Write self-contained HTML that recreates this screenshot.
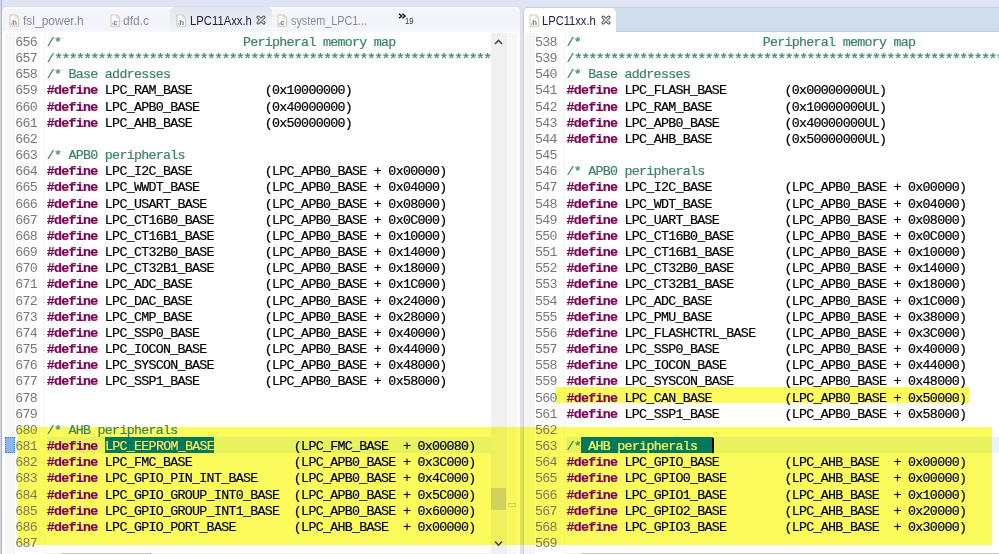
<!DOCTYPE html>
<html><head><meta charset="utf-8">
<style>
html,body{margin:0;padding:0;}
body{width:999px;height:554px;position:relative;overflow:hidden;background:#dfe3f4;font-family:"Liberation Sans",sans-serif;}
div{position:absolute;box-sizing:border-box;}
.fi{position:absolute;}
.ln{font-family:"Liberation Mono",monospace;font-size:13.3px;letter-spacing:-0.71px;line-height:16px;height:16px;color:#777777;white-space:pre;padding-top:0px;}
.cd{-webkit-text-stroke:0.2px currentColor;font-family:"Liberation Mono",monospace;font-size:13.3px;letter-spacing:-0.71px;line-height:16px;height:16px;color:#000;white-space:pre;overflow:hidden;}
.cm{color:#3c806c;}
.ast{font-size:15.5px;letter-spacing:-2.03px;vertical-align:-1.5px;}
.kw{color:#7f0055;font-weight:bold;}
.tt{font-size:12px;line-height:14px;white-space:pre;}
</style></head><body>

<div style="left:0;top:6px;width:999px;height:1px;background:#dadff2"></div>
<div style="left:0;top:0;width:1px;height:554px;background:#d0d4e4"></div>
<div style="left:1px;top:0px;width:1px;height:554px;background:#b8b8b8"></div>
<div style="left:2px;top:31px;width:518px;height:1px;background:#f9fafc"></div>
<div style="left:2px;top:7px;width:518px;height:24px;background:#f4f5fb;border-radius:5px 5px 0 0;border-top:2px solid #fafbfe"></div>
<div style="left:170px;top:7px;width:102px;height:25px;background:linear-gradient(#dfe6f0,#f3f5fa);border-radius:5px 5px 0 0;"></div>
<div style="left:2px;top:32px;width:518px;height:522px;background:#fff"></div>
<div style="left:5px;top:33px;width:10px;height:521px;background:#f7f7f7"></div>
<div style="left:44px;top:33px;width:1px;height:521px;background:#f4f4f4"></div>
<div style="left:520px;top:7px;width:3px;height:547px;background:#dde1f3"></div>
<div style="left:523px;top:7px;width:480px;height:547px;background:#fff;border-left:1px solid #cbcdd6;border-top:1px solid #cdd2e0;border-top-left-radius:5px"></div>
<div style="left:600px;top:8px;width:399px;height:24px;background:#cfdded;border-bottom:1px solid #c2d0e0"></div>
<div style="left:524px;top:8px;width:92px;height:24px;background:#fff;border-radius:5px 5px 0 0;"></div>
<div style="left:524px;top:31px;width:92px;height:1px;background:#fff"></div>
<div style="left:524px;top:32px;width:475px;height:522px;background:#fff"></div>
<div style="left:525px;top:33px;width:10px;height:521px;background:#f5f5f5"></div>
<div style="left:564px;top:33px;width:1px;height:521px;background:#f4f4f4"></div>
<div style="left:46.7px;top:437px;width:444px;height:16px;background:#e8f2fe"></div>
<div style="left:566.4px;top:437px;width:433px;height:16px;background:#e8f2fe"></div>
<div style="left:105px;top:437px;width:109px;height:16px;background:#0078d7"></div>
<div style="left:581px;top:437px;width:132px;height:16px;background:#0078d7"></div>
<svg class="fi" style="left:9.0px;top:13.5px" width="12" height="14" viewBox="0 0 12 14"><path d="M1 1 H6.8 L9.6 3.8 V12.2 H1 Z" fill="#fff" stroke="#d6c9a4" stroke-width="1.1" stroke-linejoin="round"/><path d="M6.6 1.2 V4 H9.4" fill="none" stroke="#e4dabd" stroke-width="0.9"/><rect x="2" y="9.3" width="1.3" height="1.3" fill="#8aa0c4"/><text x="3.3" y="10.6" font-family="Liberation Sans" font-size="7.8" font-weight="bold" fill="#5873a0">h</text></svg>
<div class="tt" style="left:23px;top:14px;color:#858a99">fsl_power.h</div>
<svg class="fi" style="left:109.5px;top:13.5px" width="12" height="14" viewBox="0 0 12 14"><path d="M1 1 H6.8 L9.6 3.8 V12.2 H1 Z" fill="#fff" stroke="#d6c9a4" stroke-width="1.1" stroke-linejoin="round"/><path d="M6.6 1.2 V4 H9.4" fill="none" stroke="#e4dabd" stroke-width="0.9"/><rect x="2" y="9.3" width="1.3" height="1.3" fill="#8aa0c4"/><text x="3.3" y="10.6" font-family="Liberation Sans" font-size="7.8" font-weight="bold" fill="#5873a0">c</text></svg>
<div class="tt" style="left:123px;top:14px;color:#858a99">dfd.c</div>
<svg class="fi" style="left:176.0px;top:13.5px" width="12" height="14" viewBox="0 0 12 14"><path d="M1 1 H6.8 L9.6 3.8 V12.2 H1 Z" fill="#fff" stroke="#d6c9a4" stroke-width="1.1" stroke-linejoin="round"/><path d="M6.6 1.2 V4 H9.4" fill="none" stroke="#e4dabd" stroke-width="0.9"/><rect x="2" y="9.3" width="1.3" height="1.3" fill="#8aa0c4"/><text x="3.3" y="10.6" font-family="Liberation Sans" font-size="7.8" font-weight="bold" fill="#5873a0">h</text></svg>
<div class="tt" style="left:189.5px;top:14px;color:#1e1e3c;transform:scaleX(0.94);transform-origin:0 0">LPC11Axx.h</div>
<svg class="fi" style="left:255.8px;top:15.0px" width="10" height="10" viewBox="0 0 10 10"><path d="M2.2 2.2 L7.8 7.8 M7.8 2.2 L2.2 7.8" fill="none" stroke="#4d4d4d" stroke-width="3.3" stroke-linecap="round"/><path d="M2.2 2.2 L7.8 7.8 M7.8 2.2 L2.2 7.8" fill="none" stroke="#fff" stroke-width="1.3" stroke-linecap="round"/></svg>
<svg class="fi" style="left:276.5px;top:13.5px" width="12" height="14" viewBox="0 0 12 14"><path d="M1 1 H6.8 L9.6 3.8 V12.2 H1 Z" fill="#fff" stroke="#d6c9a4" stroke-width="1.1" stroke-linejoin="round"/><path d="M6.6 1.2 V4 H9.4" fill="none" stroke="#e4dabd" stroke-width="0.9"/><rect x="2" y="9.3" width="1.3" height="1.3" fill="#8aa0c4"/><text x="3.3" y="10.6" font-family="Liberation Sans" font-size="7.8" font-weight="bold" fill="#5873a0">c</text></svg>
<div class="tt" style="left:290.5px;top:14px;color:#858a99;transform:scaleX(0.9);transform-origin:0 0">system_LPC1...</div>
<svg class="fi" style="left:398px;top:13px" width="9" height="6" viewBox="0 0 9 6"><path d="M1 0.8 L3.6 3 L1 5.2 M4.4 0.8 L7 3 L4.4 5.2" fill="none" stroke="#111" stroke-width="1.5"/></svg>
<div class="tt" style="left:405px;top:16px;font-size:9px;line-height:10px;color:#333;transform:scaleX(0.85);transform-origin:0 0">19</div>
<svg class="fi" style="left:528.7px;top:13.5px" width="12" height="14" viewBox="0 0 12 14"><path d="M1 1 H6.8 L9.6 3.8 V12.2 H1 Z" fill="#fff" stroke="#d6c9a4" stroke-width="1.1" stroke-linejoin="round"/><path d="M6.6 1.2 V4 H9.4" fill="none" stroke="#e4dabd" stroke-width="0.9"/><rect x="2" y="9.3" width="1.3" height="1.3" fill="#8aa0c4"/><text x="3.3" y="10.6" font-family="Liberation Sans" font-size="7.8" font-weight="bold" fill="#5873a0">h</text></svg>
<div class="tt" style="left:542px;top:14px;color:#1e1e3c;transform:scaleX(0.93);transform-origin:0 0">LPC11xx.h</div>
<svg class="fi" style="left:601.0px;top:15.0px" width="10" height="10" viewBox="0 0 10 10"><path d="M2.2 2.2 L7.8 7.8 M7.8 2.2 L2.2 7.8" fill="none" stroke="#4d4d4d" stroke-width="3.3" stroke-linecap="round"/><path d="M2.2 2.2 L7.8 7.8 M7.8 2.2 L2.2 7.8" fill="none" stroke="#fff" stroke-width="1.3" stroke-linecap="round"/></svg>
<div class="ln" style="top:34.90px;left:15.19px">656</div>
<div class="cd" style="top:34.90px;left:46.70px;width:444.30px"><span class="cm">/*                         Peripheral memory map</span></div>
<div class="ln" style="top:51.07px;left:15.19px">657</div>
<div class="cd" style="top:51.07px;left:46.70px;width:444.30px"><span class="cm">/<span class="ast">******************************************************************************************</span></span></div>
<div class="ln" style="top:67.24px;left:15.19px">658</div>
<div class="cd" style="top:67.24px;left:46.70px;width:444.30px"><span class="cm">/* Base addresses</span></div>
<div class="ln" style="top:83.41px;left:15.19px">659</div>
<div class="cd" style="top:83.41px;left:46.70px;width:444.30px"><span class="kw">#define</span> LPC_RAM_BASE          (0x10000000)</div>
<div class="ln" style="top:99.58px;left:15.19px">660</div>
<div class="cd" style="top:99.58px;left:46.70px;width:444.30px"><span class="kw">#define</span> LPC_APB0_BASE         (0x40000000)</div>
<div class="ln" style="top:115.75px;left:15.19px">661</div>
<div class="cd" style="top:115.75px;left:46.70px;width:444.30px"><span class="kw">#define</span> LPC_AHB_BASE          (0x50000000)</div>
<div class="ln" style="top:131.92px;left:15.19px">662</div>
<div class="ln" style="top:148.09px;left:15.19px">663</div>
<div class="cd" style="top:148.09px;left:46.70px;width:444.30px"><span class="cm">/* APB0 peripherals</span></div>
<div class="ln" style="top:164.26px;left:15.19px">664</div>
<div class="cd" style="top:164.26px;left:46.70px;width:444.30px"><span class="kw">#define</span> LPC_I2C_BASE          (LPC_APB0_BASE + 0x00000)</div>
<div class="ln" style="top:180.43px;left:15.19px">665</div>
<div class="cd" style="top:180.43px;left:46.70px;width:444.30px"><span class="kw">#define</span> LPC_WWDT_BASE         (LPC_APB0_BASE + 0x04000)</div>
<div class="ln" style="top:196.60px;left:15.19px">666</div>
<div class="cd" style="top:196.60px;left:46.70px;width:444.30px"><span class="kw">#define</span> LPC_USART_BASE        (LPC_APB0_BASE + 0x08000)</div>
<div class="ln" style="top:212.77px;left:15.19px">667</div>
<div class="cd" style="top:212.77px;left:46.70px;width:444.30px"><span class="kw">#define</span> LPC_CT16B0_BASE       (LPC_APB0_BASE + 0x0C000)</div>
<div class="ln" style="top:228.94px;left:15.19px">668</div>
<div class="cd" style="top:228.94px;left:46.70px;width:444.30px"><span class="kw">#define</span> LPC_CT16B1_BASE       (LPC_APB0_BASE + 0x10000)</div>
<div class="ln" style="top:245.11px;left:15.19px">669</div>
<div class="cd" style="top:245.11px;left:46.70px;width:444.30px"><span class="kw">#define</span> LPC_CT32B0_BASE       (LPC_APB0_BASE + 0x14000)</div>
<div class="ln" style="top:261.28px;left:15.19px">670</div>
<div class="cd" style="top:261.28px;left:46.70px;width:444.30px"><span class="kw">#define</span> LPC_CT32B1_BASE       (LPC_APB0_BASE + 0x18000)</div>
<div class="ln" style="top:277.45px;left:15.19px">671</div>
<div class="cd" style="top:277.45px;left:46.70px;width:444.30px"><span class="kw">#define</span> LPC_ADC_BASE          (LPC_APB0_BASE + 0x1C000)</div>
<div class="ln" style="top:293.62px;left:15.19px">672</div>
<div class="cd" style="top:293.62px;left:46.70px;width:444.30px"><span class="kw">#define</span> LPC_DAC_BASE          (LPC_APB0_BASE + 0x24000)</div>
<div class="ln" style="top:309.79px;left:15.19px">673</div>
<div class="cd" style="top:309.79px;left:46.70px;width:444.30px"><span class="kw">#define</span> LPC_CMP_BASE          (LPC_APB0_BASE + 0x28000)</div>
<div class="ln" style="top:325.96px;left:15.19px">674</div>
<div class="cd" style="top:325.96px;left:46.70px;width:444.30px"><span class="kw">#define</span> LPC_SSP0_BASE         (LPC_APB0_BASE + 0x40000)</div>
<div class="ln" style="top:342.13px;left:15.19px">675</div>
<div class="cd" style="top:342.13px;left:46.70px;width:444.30px"><span class="kw">#define</span> LPC_IOCON_BASE        (LPC_APB0_BASE + 0x44000)</div>
<div class="ln" style="top:358.30px;left:15.19px">676</div>
<div class="cd" style="top:358.30px;left:46.70px;width:444.30px"><span class="kw">#define</span> LPC_SYSCON_BASE       (LPC_APB0_BASE + 0x48000)</div>
<div class="ln" style="top:374.47px;left:15.19px">677</div>
<div class="cd" style="top:374.47px;left:46.70px;width:444.30px"><span class="kw">#define</span> LPC_SSP1_BASE         (LPC_APB0_BASE + 0x58000)</div>
<div class="ln" style="top:390.64px;left:15.19px">678</div>
<div class="ln" style="top:406.81px;left:15.19px">679</div>
<div class="ln" style="top:422.98px;left:15.19px">680</div>
<div class="cd" style="top:422.98px;left:46.70px;width:444.30px"><span class="cm">/* AHB peripherals</span></div>
<div class="ln" style="top:439.15px;left:15.19px">681</div>
<div class="cd" style="top:439.15px;left:46.70px;width:444.30px"><span class="kw">#define</span> LPC_EEPROM_BASE           (LPC_FMC_BASE  + 0x00080)</div>
<div class="ln" style="top:455.32px;left:15.19px">682</div>
<div class="cd" style="top:455.32px;left:46.70px;width:444.30px"><span class="kw">#define</span> LPC_FMC_BASE              (LPC_APB0_BASE + 0x3C000)</div>
<div class="ln" style="top:471.49px;left:15.19px">683</div>
<div class="cd" style="top:471.49px;left:46.70px;width:444.30px"><span class="kw">#define</span> LPC_GPIO_PIN_INT_BASE     (LPC_APB0_BASE + 0x4C000)</div>
<div class="ln" style="top:487.66px;left:15.19px">684</div>
<div class="cd" style="top:487.66px;left:46.70px;width:444.30px"><span class="kw">#define</span> LPC_GPIO_GROUP_INT0_BASE  (LPC_APB0_BASE + 0x5C000)</div>
<div class="ln" style="top:503.83px;left:15.19px">685</div>
<div class="cd" style="top:503.83px;left:46.70px;width:444.30px"><span class="kw">#define</span> LPC_GPIO_GROUP_INT1_BASE  (LPC_APB0_BASE + 0x60000)</div>
<div class="ln" style="top:520.00px;left:15.19px">686</div>
<div class="cd" style="top:520.00px;left:46.70px;width:444.30px"><span class="kw">#define</span> LPC_GPIO_PORT_BASE        (LPC_AHB_BASE  + 0x00000)</div>
<div class="ln" style="top:536.17px;left:15.19px">687</div>
<div class="ln" style="top:34.90px;left:534.99px">538</div>
<div class="cd" style="top:34.90px;left:566.40px;width:432.60px"><span class="cm">/*                         Peripheral memory map</span></div>
<div class="ln" style="top:51.07px;left:534.99px">539</div>
<div class="cd" style="top:51.07px;left:566.40px;width:432.60px"><span class="cm">/<span class="ast">******************************************************************************************</span></span></div>
<div class="ln" style="top:67.24px;left:534.99px">540</div>
<div class="cd" style="top:67.24px;left:566.40px;width:432.60px"><span class="cm">/* Base addresses</span></div>
<div class="ln" style="top:83.41px;left:534.99px">541</div>
<div class="cd" style="top:83.41px;left:566.40px;width:432.60px"><span class="kw">#define</span> LPC_FLASH_BASE        (0x00000000UL)</div>
<div class="ln" style="top:99.58px;left:534.99px">542</div>
<div class="cd" style="top:99.58px;left:566.40px;width:432.60px"><span class="kw">#define</span> LPC_RAM_BASE          (0x10000000UL)</div>
<div class="ln" style="top:115.75px;left:534.99px">543</div>
<div class="cd" style="top:115.75px;left:566.40px;width:432.60px"><span class="kw">#define</span> LPC_APB0_BASE         (0x40000000UL)</div>
<div class="ln" style="top:131.92px;left:534.99px">544</div>
<div class="cd" style="top:131.92px;left:566.40px;width:432.60px"><span class="kw">#define</span> LPC_AHB_BASE          (0x50000000UL)</div>
<div class="ln" style="top:148.09px;left:534.99px">545</div>
<div class="ln" style="top:164.26px;left:534.99px">546</div>
<div class="cd" style="top:164.26px;left:566.40px;width:432.60px"><span class="cm">/* APB0 peripherals</span></div>
<div class="ln" style="top:180.43px;left:534.99px">547</div>
<div class="cd" style="top:180.43px;left:566.40px;width:432.60px"><span class="kw">#define</span> LPC_I2C_BASE          (LPC_APB0_BASE + 0x00000)</div>
<div class="ln" style="top:196.60px;left:534.99px">548</div>
<div class="cd" style="top:196.60px;left:566.40px;width:432.60px"><span class="kw">#define</span> LPC_WDT_BASE          (LPC_APB0_BASE + 0x04000)</div>
<div class="ln" style="top:212.77px;left:534.99px">549</div>
<div class="cd" style="top:212.77px;left:566.40px;width:432.60px"><span class="kw">#define</span> LPC_UART_BASE         (LPC_APB0_BASE + 0x08000)</div>
<div class="ln" style="top:228.94px;left:534.99px">550</div>
<div class="cd" style="top:228.94px;left:566.40px;width:432.60px"><span class="kw">#define</span> LPC_CT16B0_BASE       (LPC_APB0_BASE + 0x0C000)</div>
<div class="ln" style="top:245.11px;left:534.99px">551</div>
<div class="cd" style="top:245.11px;left:566.40px;width:432.60px"><span class="kw">#define</span> LPC_CT16B1_BASE       (LPC_APB0_BASE + 0x10000)</div>
<div class="ln" style="top:261.28px;left:534.99px">552</div>
<div class="cd" style="top:261.28px;left:566.40px;width:432.60px"><span class="kw">#define</span> LPC_CT32B0_BASE       (LPC_APB0_BASE + 0x14000)</div>
<div class="ln" style="top:277.45px;left:534.99px">553</div>
<div class="cd" style="top:277.45px;left:566.40px;width:432.60px"><span class="kw">#define</span> LPC_CT32B1_BASE       (LPC_APB0_BASE + 0x18000)</div>
<div class="ln" style="top:293.62px;left:534.99px">554</div>
<div class="cd" style="top:293.62px;left:566.40px;width:432.60px"><span class="kw">#define</span> LPC_ADC_BASE          (LPC_APB0_BASE + 0x1C000)</div>
<div class="ln" style="top:309.79px;left:534.99px">555</div>
<div class="cd" style="top:309.79px;left:566.40px;width:432.60px"><span class="kw">#define</span> LPC_PMU_BASE          (LPC_APB0_BASE + 0x38000)</div>
<div class="ln" style="top:325.96px;left:534.99px">556</div>
<div class="cd" style="top:325.96px;left:566.40px;width:432.60px"><span class="kw">#define</span> LPC_FLASHCTRL_BASE    (LPC_APB0_BASE + 0x3C000)</div>
<div class="ln" style="top:342.13px;left:534.99px">557</div>
<div class="cd" style="top:342.13px;left:566.40px;width:432.60px"><span class="kw">#define</span> LPC_SSP0_BASE         (LPC_APB0_BASE + 0x40000)</div>
<div class="ln" style="top:358.30px;left:534.99px">558</div>
<div class="cd" style="top:358.30px;left:566.40px;width:432.60px"><span class="kw">#define</span> LPC_IOCON_BASE        (LPC_APB0_BASE + 0x44000)</div>
<div class="ln" style="top:374.47px;left:534.99px">559</div>
<div class="cd" style="top:374.47px;left:566.40px;width:432.60px"><span class="kw">#define</span> LPC_SYSCON_BASE       (LPC_APB0_BASE + 0x48000)</div>
<div class="ln" style="top:390.64px;left:534.99px">560</div>
<div class="cd" style="top:390.64px;left:566.40px;width:432.60px"><span class="kw">#define</span> LPC_CAN_BASE          (LPC_APB0_BASE + 0x50000)</div>
<div class="ln" style="top:406.81px;left:534.99px">561</div>
<div class="cd" style="top:406.81px;left:566.40px;width:432.60px"><span class="kw">#define</span> LPC_SSP1_BASE         (LPC_APB0_BASE + 0x58000)</div>
<div class="ln" style="top:422.98px;left:534.99px">562</div>
<div class="ln" style="top:439.15px;left:534.99px">563</div>
<div class="cd" style="top:439.15px;left:566.40px;width:432.60px"><span class="cm">/*</span></div>
<div class="ln" style="top:455.32px;left:534.99px">564</div>
<div class="cd" style="top:455.32px;left:566.40px;width:432.60px"><span class="kw">#define</span> LPC_GPIO_BASE         (LPC_AHB_BASE  + 0x00000)</div>
<div class="ln" style="top:471.49px;left:534.99px">565</div>
<div class="cd" style="top:471.49px;left:566.40px;width:432.60px"><span class="kw">#define</span> LPC_GPIO0_BASE        (LPC_AHB_BASE  + 0x00000)</div>
<div class="ln" style="top:487.66px;left:534.99px">566</div>
<div class="cd" style="top:487.66px;left:566.40px;width:432.60px"><span class="kw">#define</span> LPC_GPIO1_BASE        (LPC_AHB_BASE  + 0x10000)</div>
<div class="ln" style="top:503.83px;left:534.99px">567</div>
<div class="cd" style="top:503.83px;left:566.40px;width:432.60px"><span class="kw">#define</span> LPC_GPIO2_BASE        (LPC_AHB_BASE  + 0x20000)</div>
<div class="ln" style="top:520.00px;left:534.99px">568</div>
<div class="cd" style="top:520.00px;left:566.40px;width:432.60px"><span class="kw">#define</span> LPC_GPIO3_BASE        (LPC_AHB_BASE  + 0x30000)</div>
<div class="ln" style="top:536.17px;left:534.99px">569</div>
<div class="cd" style="top:439.15px;left:105px;color:#fff">LPC_EEPROM_BASE</div>
<div class="cd" style="top:439.15px;left:581px;color:#fff"> AHB peripherals</div>
<div style="left:712px;top:438px;width:2px;height:15px;background:#000"></div>
<div style="left:5px;top:437px;width:10px;height:16px;background:#8ab8ec;border:1px dotted #3a7fd0"></div>
<div style="left:491px;top:33px;width:16px;height:521px;background:#f0f0f0"></div>
<div style="left:507px;top:33px;width:10px;height:521px;background:#f7f7f7"></div>
<svg class="fi" style="left:494px;top:38px" width="9" height="8" viewBox="0 0 9 8"><path d="M1 6 L4.5 2.3 L8 6" fill="none" stroke="#404040" stroke-width="1.5"/></svg>
<svg class="fi" style="left:494px;top:539px" width="9" height="8" viewBox="0 0 9 8"><path d="M1 2.5 L4.5 6.2 L8 2.5" fill="none" stroke="#404040" stroke-width="1.5"/></svg>
<div style="left:491px;top:488px;width:15px;height:22px;background:#d0d0d0"></div>
<div style="left:508px;top:503px;width:8px;height:4px;border:1px solid #d4d4d4"></div>
<div style="left:45px;top:553px;width:446px;height:1px;background:#f0f0f0"></div>
<div style="left:62px;top:553px;width:89px;height:1px;background:#c4c4c4"></div>
<div style="left:565px;top:553px;width:434px;height:1px;background:#f0f0f0"></div>
<div style="left:582px;top:553px;width:417px;height:1px;background:#c4c4c4"></div>
<div style="left:18px;top:427px;width:974px;height:118px;background:#fcfb5c;mix-blend-mode:darken"></div>
<div style="left:555px;top:387px;width:415px;height:16px;background:#fcfb5c;mix-blend-mode:darken"></div>
</body></html>
